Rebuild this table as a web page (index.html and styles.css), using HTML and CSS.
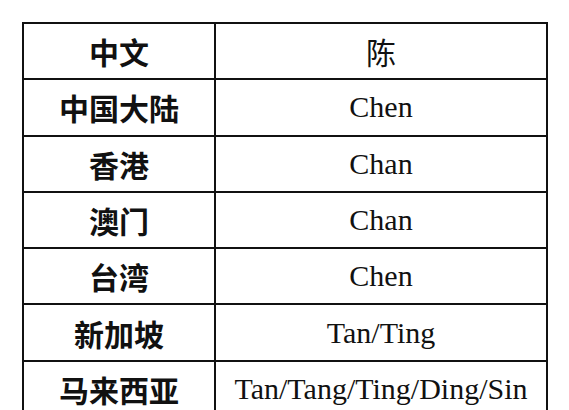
FILE: index.html
```html
<!DOCTYPE html>
<html lang="zh">
<head>
<meta charset="utf-8">
<title>陈</title>
<link rel="stylesheet" href="styles.css">
</head>
<body>
<table class="names">
  <tr><th>中文</th><td class="cjk">陈</td></tr>
  <tr><th>中国大陆</th><td>Chen</td></tr>
  <tr><th>香港</th><td>Chan</td></tr>
  <tr><th>澳门</th><td>Chan</td></tr>
  <tr><th>台湾</th><td>Chen</td></tr>
  <tr><th>新加坡</th><td>Tan/Ting</td></tr>
  <tr><th>马来西亚</th><td>Tan/Tang/Ting/Ding/Sin</td></tr>
</table>
</body>
</html>
```
FILE: styles.css
```css
html, body {
  margin: 0;
  padding: 0;
  background: #fff;
  overflow: hidden;
}
body {
  padding: 22px 0 0 22px;
}
.names {
  border-collapse: collapse;
  width: 526px;
  table-layout: fixed;
}
.names th,
.names td {
  border: 2px solid #111;
  height: 54.3px;
  padding: 0;
  text-align: center;
  vertical-align: middle;
  color: #111;
  font-size: 30px;
  line-height: 1;
}
.names th {
  width: 190px;
  font-family: "Noto Sans CJK SC", sans-serif;
  font-weight: 700;
}
.names td {
  font-family: "Liberation Serif", "Noto Sans CJK SC", serif;
  font-weight: 400;
}
.names td.cjk {
  font-family: "Noto Sans CJK SC", sans-serif;
  font-weight: 400;
}
```
